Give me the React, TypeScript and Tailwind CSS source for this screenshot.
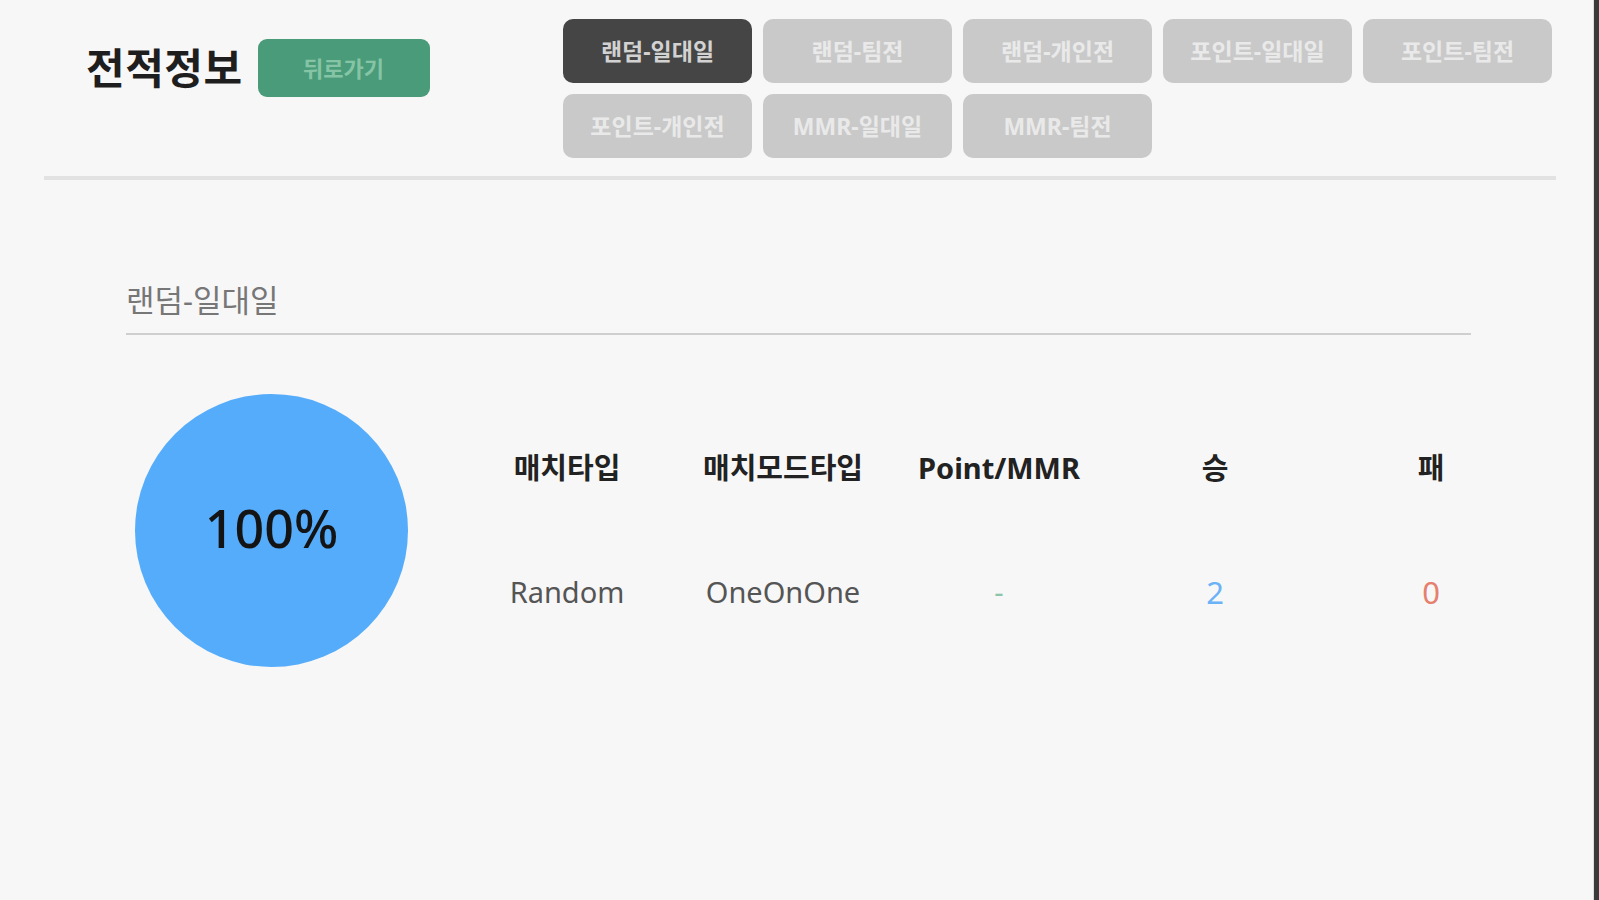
import React from "react";

const tabs = [
  "랜덤-일대일",
  "랜덤-팀전",
  "랜덤-개인전",
  "포인트-일대일",
  "포인트-팀전",
  "포인트-개인전",
  "MMR-일대일",
  "MMR-팀전",
];

const headers = ["매치타입", "매치모드타입", "Point/MMR", "승", "패"];

export default function App() {
  const font = { fontFamily: '"Noto Sans", "Noto Sans CJK KR", sans-serif' };
  return (
    <div className="min-h-screen w-full bg-[#f7f7f7] flex" style={font}>
      <div className="flex-1 min-h-screen">
        <div className="ml-[44px] w-[1512px]">
          <header className="flex items-start pt-[19px] pb-[18px]">
            <div className="flex items-center pl-[42px] pt-[20px]">
              <h1 className="text-[42px] leading-[58px] font-bold text-[#1e1e1e] tracking-[0.5px]">
                전적정보
              </h1>
              <button className="ml-[15px] w-[172px] h-[58px] rounded-[9px] bg-[#4a9b79] text-[#86c4a6] text-[22px] font-bold">
                뒤로가기
              </button>
            </div>
            <div className="ml-auto mr-[4px] grid grid-cols-[repeat(5,189px)] gap-x-[11px] gap-y-[11px]">
              {tabs.map((t, i) => (
                <button
                  key={t}
                  className={
                    i === 0
                      ? "h-[64px] rounded-[10px] bg-[#454545] text-[#d2d2d2] text-[23px] font-bold"
                      : "h-[64px] rounded-[10px] bg-[#c9c9c9] text-[#e9e9e9] text-[23px] font-bold"
                  }
                >
                  {t}
                </button>
              ))}
            </div>
          </header>
          <div className="h-[4px] bg-[#e2e2e2]" />
        </div>

        <section className="ml-[126px] w-[1345px] mt-[100px]">
          <h2 className="text-[31px] leading-[40px] text-[#777] pb-[13px] border-b-[2px] border-[#cfcfcf]">
            랜덤-일대일
          </h2>
          <div className="flex items-start mt-[59px]">
            <div className="ml-[9px] w-[273px] h-[273px] shrink-0 rounded-full bg-[#55acfa] flex items-center justify-center">
              <span className="text-[52px] leading-[60px] pb-[6px] font-medium text-[#141414]">100%</span>
            </div>
            <div className="ml-[51px] pt-[54px] shrink-0">
              <div className="flex">
                {headers.map((h) => (
                  <div
                    key={h}
                    className="w-[216px] h-[40px] leading-[40px] text-center text-[29px] font-bold text-[#222]"
                  >
                    {h}
                  </div>
                ))}
              </div>
              <div className="flex mt-[84px]">
                <div className="w-[216px] h-[40px] leading-[40px] text-center text-[29px] text-[#555]">
                  Random
                </div>
                <div className="w-[216px] h-[40px] leading-[40px] text-center text-[29px] text-[#555]">
                  OneOnOne
                </div>
                <div className="w-[216px] h-[40px] leading-[40px] text-center text-[29px] text-[#8cc5aa]">
                  -
                </div>
                <div className="w-[216px] h-[40px] leading-[40px] text-center text-[31px] text-[#6cb2f6]">
                  2
                </div>
                <div className="w-[216px] h-[40px] leading-[40px] text-center text-[31px] text-[#e5806f]">
                  0
                </div>
              </div>
            </div>
          </div>
        </section>
      </div>
      <div className="w-[1px] bg-[#dcdcdc]" />
      <div className="w-[5px] bg-[#3a3a3a]" />
    </div>
  );
}
